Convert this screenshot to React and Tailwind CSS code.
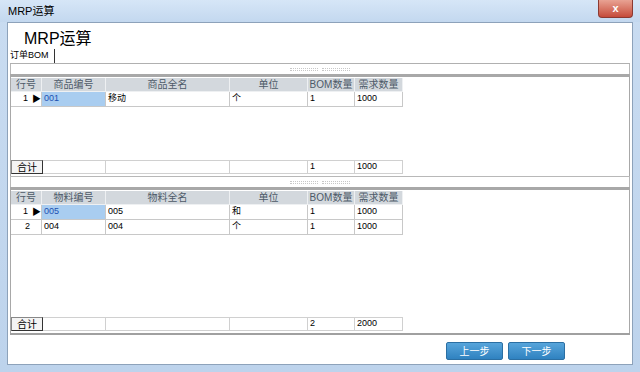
const font = { fontFamily: '"Liberation Sans", "Noto Sans CJK SC", sans-serif' }

const topCols = [
  { title: '行号', w: 31 },
  { title: '商品编号', w: 64 },
  { title: '商品全名', w: 124 },
  { title: '单位', w: 78 },
  { title: 'BOM数量', w: 47 },
  { title: '需求数量', w: 48 },
]

const bottomCols = [
  { title: '行号', w: 31 },
  { title: '物料编号', w: 64 },
  { title: '物料全名', w: 124 },
  { title: '单位', w: 78 },
  { title: 'BOM数量', w: 47 },
  { title: '需求数量', w: 48 },
]

function Grip() {
  return (
    <div className="flex h-[10px] items-center gap-[4px] border-x border-[#b8b8b8] bg-white pl-[279px]">
      <div className="h-[3px] w-[28px] border-y border-dotted border-[#c8c8c8]" />
      <div className="h-[3px] w-[28px] border-y border-dotted border-[#c8c8c8]" />
    </div>
  )
}

function Grid({ cols, rows, footer, height }) {
  return (
    <div className="flex flex-col border-t-[3px] border-l border-r border-[#a8a8a8] bg-white" style={{ height }}>
      <div className="flex pt-[1px]">
        {cols.map((c, i) => (
          <div
            key={i}
            className="flex h-[14px] items-center justify-center border-r border-b border-[#eef0f2] bg-[#d3d8dd] text-[10px] text-[#4d5a68]"
            style={{ width: c.w }}
          >
            {c.title}
          </div>
        ))}
      </div>
      {rows.map((r, ri) => (
        <div key={ri} className="flex">
          <div className="flex h-[15px] w-[31px] items-center border-r border-b border-[#c8c8c8] text-[9px]">
            <span className="w-[19px] text-right">{ri + 1}</span>
            {ri === 0 && <span className="ml-[4px] text-[9px] leading-none">▶</span>}
          </div>
          {r.map((v, ci) => (
            <div
              key={ci}
              className={`flex h-[15px] items-center border-r border-b border-[#c8c8c8] pl-[2px] text-[9px] ${
                ri === 0 && ci === 0 ? 'bg-[#a9cdf0] text-[#2050b0]' : ''
              }`}
              style={{ width: cols[ci + 1].w }}
            >
              {v}
            </div>
          ))}
        </div>
      ))}
      <div className="flex-1" />
      <div className="mb-[2px] flex">
        <div className="flex h-[14px] w-[32px] items-center justify-center border border-[#888] border-r-[#333] border-b-[#333] bg-[#f4f4f4] text-[10px]">
          合计
        </div>
        {footer.map((v, ci) => (
          <div
            key={ci}
            className="flex h-[14px] items-center border-r border-t border-b border-[#d0d0d0] pl-[2px] text-[9px]"
            style={{ width: cols[ci + 1].w - (ci === 0 ? 1 : 0) }}
          >
            {v}
          </div>
        ))}
      </div>
    </div>
  )
}

export default function App() {
  return (
    <div className="flex h-[372px] w-[640px] flex-col bg-gradient-to-b from-[#c9dcf1] to-[#bdd3ec]" style={font}>
      <div className="relative flex h-[22px] items-center bg-gradient-to-b from-[#d6e6f7] to-[#c3d8ef] pl-[8px]">
        <span className="text-[11px] text-black">MRP运算</span>
        <div className="absolute top-0 right-[7px] flex h-[18px] w-[35px] items-center justify-center rounded-b-[4px] border border-t-0 border-[#8c3a32] bg-gradient-to-b from-[#e8a293] to-[#c54a3a] text-[11px] font-bold text-white">
          x
        </div>
      </div>
      <div className="mx-[7px] flex h-[343px] flex-col border border-[#8da2ba] bg-white">
        <div className="h-[25px] pl-[16px] pt-[8px] text-[16px] leading-none text-black">MRP运算</div>
        <div className="flex h-[15px] items-center pl-[2px]">
          <span className="text-[9px] text-black">订单BOM</span>
          <div className="ml-[5px] h-[14px] w-px bg-[#333]" />
        </div>
        <div className="px-[2px]">
          <div className="border-t border-[#b0b0b0]" />
          <Grip />
          <Grid cols={topCols} rows={[['001', '移动', '个', '1', '1000']]} footer={['', '', '', '1', '1000']} height={102} />
          <div className="flex h-[11px] flex-col">
            <div className="border-t border-[#b8b8b8]" />
            <Grip />
          </div>
          <Grid
            cols={bottomCols}
            rows={[
              ['005', '005', '和', '1', '1000'],
              ['004', '004', '个', '1', '1000'],
            ]}
            footer={['', '', '', '2', '2000']}
            height={146}
          />
          <div className="border-t-2 border-[#a0a0a0]" />
        </div>
        <div className="flex flex-1 items-start gap-[5px] pl-[438px] pt-[7px]">
          <div className="flex h-[18px] w-[57px] items-center justify-center rounded-[2px] border border-[#2b6fa3] bg-gradient-to-b from-[#57a5db] to-[#2f82c0] text-[10px] text-white">
            上一步
          </div>
          <div className="flex h-[18px] w-[57px] items-center justify-center rounded-[2px] border border-[#2b6fa3] bg-gradient-to-b from-[#57a5db] to-[#2f82c0] text-[10px] text-white">
            下一步
          </div>
        </div>
      </div>
    </div>
  )
}
